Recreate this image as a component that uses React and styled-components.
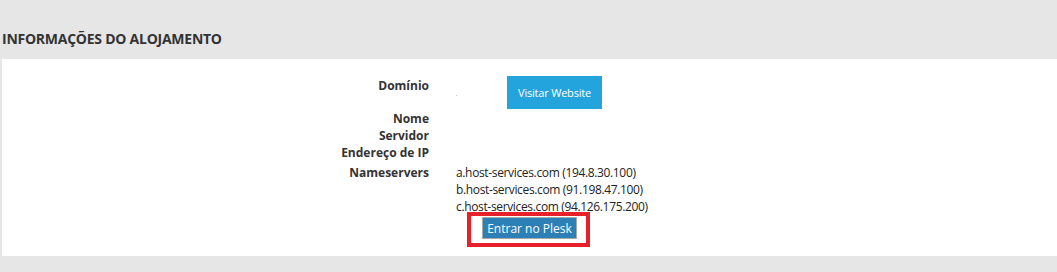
import styled, { createGlobalStyle } from 'styled-components';

const GlobalStyle = createGlobalStyle`
  html, body {
    margin: 0;
    padding: 0;
    background: #e6e6e6;
  }
  body {
    font-family: "Open Sans", "Liberation Sans", sans-serif;
    color: #333;
  }
`;

const Page = styled.div`
  width: 1057px;
  height: 272px;
  padding-top: 29px;
  box-sizing: border-box;
  background: #e6e6e6;
`;

const Heading = styled.h2`
  margin: 0 0 10px 2px;
  font-size: 14px;
  line-height: 20px;
  font-weight: 700;
  color: #333;
  letter-spacing: -0.25px;
`;

const Panel = styled.div`
  margin-left: 2px;
  background: #fff;
  height: 197px;
  padding-top: 17px;
  box-sizing: border-box;
`;

const InfoGrid = styled.div`
  display: grid;
  grid-template-columns: 427px 1fr;
  column-gap: 27px;
  font-size: 12px;
  line-height: 17px;
`;

const Label = styled.div`
  text-align: right;
  font-weight: 700;
  color: #333;
  padding-top: ${(props) => props.$top || 0}px;
`;

const Value = styled.div`
  color: #222;
  padding-top: ${(props) => props.$top || 0}px;
  min-height: 17px;
  letter-spacing: -0.35px;
`;

const DomainValue = styled.div`
  display: flex;
  align-items: flex-start;
  height: 34px;
`;

const EmptyDot = styled.span`
  width: 1px;
  height: 1px;
  margin-top: 19px;
  background: #ccc;
`;

const VisitButton = styled.button`
  margin-left: 50px;
  width: 95px;
  height: 33px;
  border: none;
  background: #24a4dc;
  color: #fff;
  font-family: inherit;
  font-size: 11px;
  letter-spacing: -0.2px;
  padding: 0;
  cursor: pointer;
`;

const Nameserver = styled.div`
  white-space: nowrap;
`;

const PleskRow = styled.div`
  grid-column: 2;
  position: relative;
  padding: 2px 0 0 26px;
`;

const PleskButton = styled.button`
  width: 95px;
  height: 22px;
  border: 1px solid #a9a9a9;
  background: #2c80b6;
  color: #fff;
  font-family: inherit;
  font-size: 12px;
  padding: 0;
  cursor: pointer;
`;

const Highlight = styled.span`
  position: absolute;
  left: 11px;
  top: -3px;
  width: 123px;
  height: 35px;
  border: 4px solid #e8202a;
  box-sizing: border-box;
  pointer-events: none;
`;

const App = () => {
  return (
    <Page>
      <GlobalStyle />
      <Heading>INFORMAÇÕES DO ALOJAMENTO</Heading>
      <Panel>
        <InfoGrid>
          <Label $top={1}>Domínio</Label>
          <DomainValue>
            <EmptyDot />
            <VisitButton>Visitar Website</VisitButton>
          </DomainValue>
          <Label>Nome</Label>
          <Value />
          <Label>Servidor</Label>
          <Value />
          <Label>Endereço de IP</Label>
          <Value />
          <Label $top={3}>Nameservers</Label>
          <Value $top={3}>
            <Nameserver>a.host-services.com (194.8.30.100)</Nameserver>
            <Nameserver>b.host-services.com (91.198.47.100)</Nameserver>
            <Nameserver>c.host-services.com (94.126.175.200)</Nameserver>
          </Value>
          <PleskRow>
            <PleskButton>Entrar no Plesk</PleskButton>
            <Highlight />
          </PleskRow>
        </InfoGrid>
      </Panel>
    </Page>
  );
};

export default App;
